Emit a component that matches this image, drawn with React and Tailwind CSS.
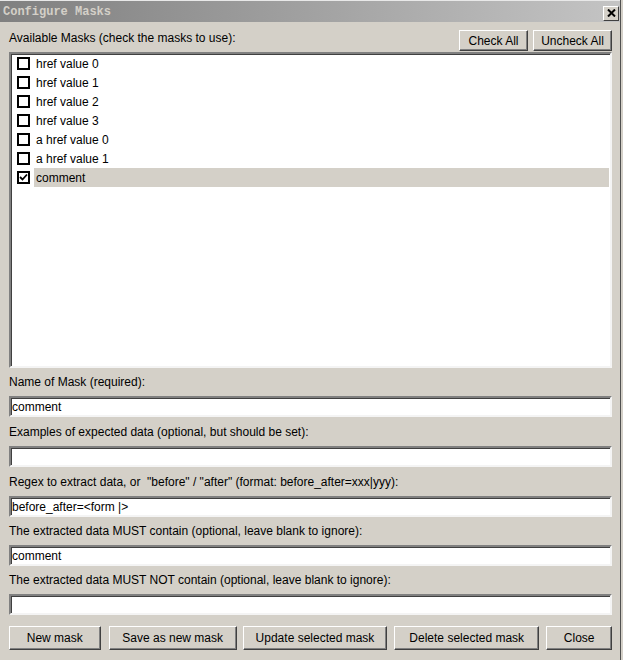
import React from 'react';

const masks = [
    'href value 0',
    'href value 1',
    'href value 2',
    'href value 3',
    'a href value 0',
    'a href value 1',
    'comment',
];

const sunken =
    'border-2 border-t-[#808080] border-l-[#808080] border-b-[#f4f4f4] border-r-[#f4f4f4] shadow-[inset_1px_1px_0_#404040]';

const raised =
    'border border-t-white border-l-white border-b-[#404040] border-r-[#404040] shadow-[inset_-1px_-1px_0_#808080] bg-[#d4d0c8] text-[12px] text-black leading-none';

const Button = ({ children, className = '' }) => (
    <button type="button" className={`${raised} ${className}`}>
        {children}
    </button>
);

const Field = ({ label, value, tall }) => (
    <>
        <div className={`${tall ? 'h-[29px]' : 'h-[28px]'} flex items-center text-[12px] text-black whitespace-pre`}>
            {label}
        </div>
        <div className={`${sunken} h-[21px] bg-white flex items-center px-[1px] text-[12px] text-black`}>
            {value}
        </div>
    </>
);

const CheckBox = ({ checked }) => (
    <span className="w-[13px] h-[13px] border-2 border-black bg-white flex items-center justify-center shrink-0">
        {checked && (
            <svg width="9" height="9" viewBox="0 0 9 9">
                <path d="M1 4 L3.5 6.5 L8 1.5" fill="none" stroke="black" strokeWidth="1.8" />
            </svg>
        )}
    </span>
);

const App = () => {
    const [checked, setChecked] = React.useState({ comment: true });
    const [selected, setSelected] = React.useState('comment');

    return (
        <div
            className="w-[623px] h-[660px] bg-[#d4d0c8] flex overflow-hidden"
            style={{ fontFamily: '"Liberation Sans", Arial, sans-serif' }}
        >
            <div className="w-[621px] border-r border-r-[#505050] flex flex-col">
                {/* title bar */}
                <div className="border-t border-t-[#e8e8e8] h-[22px] bg-gradient-to-r from-[#808080] to-[#c4c4c4] flex items-center justify-between pl-[3px] pr-[1px]">
                    <span
                        className="text-[12px] font-bold text-[#d4d0c8]"
                        style={{ fontFamily: '"Liberation Mono", "Courier New", monospace' }}
                    >
                        Configure Masks
                    </span>
                    <button
                        type="button"
                        className="w-[16px] h-[15px] border border-t-white border-l-white border-b-[#404040] border-r-[#404040] bg-[#d4d0c8] flex items-center justify-center mt-[3px]"
                    >
                        <svg width="9" height="8" viewBox="0 0 9 8">
                            <path d="M1 0.5 L8 7.5 M8 0.5 L1 7.5" stroke="black" strokeWidth="2" />
                        </svg>
                    </button>
                </div>

                <div className="flex flex-col pl-[9px] pr-[8px]">
                    <div className="flex items-end justify-between h-[29px]">
                        <span className="text-[12px] text-black pb-[4px]">Available Masks (check the masks to use):</span>
                        <div className="flex gap-[5px]">
                            <Button className="w-[69px] h-[21px]">Check All</Button>
                            <Button className="w-[79px] h-[21px]">Uncheck All</Button>
                        </div>
                    </div>

                    {/* mask list */}
                    <div className={`${sunken} mt-[1px] h-[316px] bg-white flex flex-col`}>
                        {masks.map((m) => (
                            <div
                                key={m}
                                className="h-[19px] flex items-center pl-[6px] pr-[1px]"
                                onClick={() => setSelected(m)}
                            >
                                <span
                                    onClick={() => setChecked({ ...checked, [m]: !checked[m] })}
                                    className="flex"
                                >
                                    <CheckBox checked={!!checked[m]} />
                                </span>
                                <span
                                    className={`ml-[4px] pl-[2px] flex-1 h-[19px] flex items-center text-[12px] text-black ${
                                        selected === m ? 'bg-[#d4d0c8]' : ''
                                    }`}
                                >
                                    {m}
                                </span>
                            </div>
                        ))}
                    </div>

                    <Field label="Name of Mask (required):" value="comment" />
                    <Field tall label="Examples of expected data (optional, but should be set):" value="" />
                    <Field
                        tall
                        label={'Regex to extract data, or  "before" / "after" (format: before_after=xxx|yyy):'}
                        value="before_after=<form |>"
                    />
                    <Field label="The extracted data MUST contain (optional, leave blank to ignore):" value="comment" />
                    <Field label="The extracted data MUST NOT contain (optional, leave blank to ignore):" value="" />

                    <div className="flex mt-[11px] gap-[7px]">
                        <Button className="w-[92px] h-[24px]">New mask</Button>
                        <Button className="w-[129px] h-[24px] ml-[1px]">Save as new mask</Button>
                        <Button className="w-[145px] h-[24px] -ml-[1px]">Update selected mask</Button>
                        <Button className="w-[146px] h-[24px]">Delete selected mask</Button>
                        <Button className="w-[66px] h-[24px]">Close</Button>
                    </div>
                </div>
            </div>
        </div>
    );
};

export default App;
